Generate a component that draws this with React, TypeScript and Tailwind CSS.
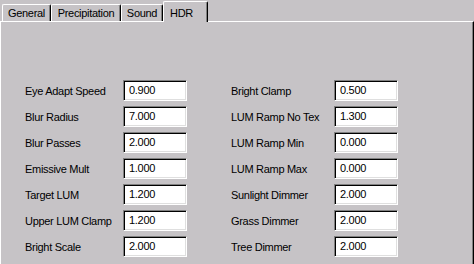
const LEFT = [
  ["Eye Adapt Speed", "0.900"],
  ["Blur Radius", "7.000"],
  ["Blur Passes", "2.000"],
  ["Emissive Mult", "1.000"],
  ["Target LUM", "1.200"],
  ["Upper LUM Clamp", "1.200"],
  ["Bright Scale", "2.000"],
];

const RIGHT = [
  ["Bright Clamp", "0.500"],
  ["LUM Ramp No Tex", "1.300"],
  ["LUM Ramp Min", "0.000"],
  ["LUM Ramp Max", "0.000"],
  ["Sunlight Dimmer", "2.000"],
  ["Grass Dimmer", "2.000"],
  ["Tree Dimmer", "2.000"],
];

const TABS = [
  { label: "General", w: "w-[49px]" },
  { label: "Precipitation", w: "w-[70px]" },
  { label: "Sound", w: "w-[42px]" },
  { label: "HDR", w: "w-[45px]", active: true },
];

export default function App() {
  return (
    <div className="min-h-screen w-[474px] bg-[#c6c3c6] text-black font-['Liberation_Sans',Arial,sans-serif] text-[11px] tracking-[-0.3px] flex flex-col">
      {/* tab strip */}
      <div className="flex items-end h-[21px] pl-[2px]">
        {TABS.map((t) =>
          t.active ? (
            <div
              key={t.label}
              className={`${t.w} h-[21px] -mb-px relative z-10 bg-[#c6c3c6] border-t border-l border-white border-r border-r-black shadow-[inset_-1px_0_0_#808080] rounded-tl-[2px] rounded-tr-[2px] pl-[6px] pt-[3px]`}
            >
              HDR
            </div>
          ) : (
            <div
              key={t.label}
              className={`${t.w} h-[17px] border-t border-l border-white border-r border-r-black shadow-[inset_-1px_0_0_#808080] rounded-tl-[2px] rounded-tr-[2px] flex items-center justify-center pt-[1px]`}
            >
              {t.label}
            </div>
          )
        )}
      </div>

      {/* panel */}
      <div className="flex-1 border-t border-l border-white border-r border-r-black shadow-[inset_-1px_0_0_#808080] pl-[24px] pt-[58px] flex gap-[44px]">
        <Column rows={LEFT} labelW="w-[98px]" />
        <Column rows={RIGHT} labelW="w-[103px]" />
      </div>
    </div>
  );
}

function Column({ rows, labelW }: { rows: string[][]; labelW: string }) {
  return (
    <div className="flex flex-col gap-[5px]">
      {rows.map(([label, value]) => (
        <div key={label} className="flex items-center h-[21px]">
          <span className={`${labelW} pt-[2px] whitespace-nowrap`}>{label}</span>
          <div className="w-[64px] h-[21px] bg-white border-t border-l border-t-[#808080] border-l-[#808080] border-b border-r border-b-white border-r-white shadow-[inset_1px_1px_0_#000,inset_-1px_-1px_0_#dfdfdf] pl-[5px] flex items-center">
            {value}
          </div>
        </div>
      ))}
    </div>
  );
}
